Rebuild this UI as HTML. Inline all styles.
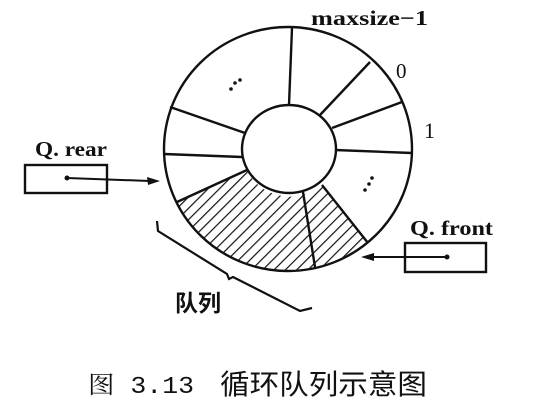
<!DOCTYPE html>
<html><head><meta charset="utf-8"><style>
html,body{margin:0;padding:0;background:#fff;}
svg{display:block}
</style></head><body>
<svg width="559" height="415" viewBox="0 0 559 415" xmlns="http://www.w3.org/2000/svg">
<defs>
<pattern id="h" patternUnits="userSpaceOnUse" width="8" height="8" patternTransform="rotate(45)">
<line x1="0" y1="0" x2="0" y2="8" stroke="#111" stroke-width="2.4"/>
</pattern>
</defs>
<rect width="559" height="415" fill="#fff"/>
<path d="M177,202 L247,170 A47,44 0 0 0 322,185 L368,243 A124,122 0 0 1 177,202 Z" fill="url(#h)" stroke="none"/>
<g stroke="#111" stroke-width="2.4" fill="none">
<ellipse cx="288" cy="149" rx="124" ry="122"/>
<ellipse cx="289" cy="149" rx="47" ry="44" fill="#fff"/>
<line x1="292" y1="28" x2="289" y2="105"/>
<line x1="370" y1="62" x2="320" y2="115"/>
<line x1="402" y1="102" x2="332" y2="128"/>
<line x1="412" y1="153" x2="335" y2="150"/>
<line x1="368" y1="243" x2="322" y2="185"/>
<line x1="315" y1="267" x2="303" y2="192"/>
<line x1="177" y1="202" x2="247" y2="170"/>
<line x1="164" y1="154" x2="242" y2="157"/>
<line x1="170" y1="107" x2="245" y2="133"/>
<rect x="25" y="165" width="82" height="28" stroke-width="2.4"/>
<line x1="67" y1="178" x2="150" y2="181" stroke-width="2"/>
<rect x="405" y="243" width="81" height="29" stroke-width="2.4"/>
<line x1="447" y1="257" x2="370" y2="257" stroke-width="2"/>
<path d="M157,221 L158,231 L227,274 L229,279 L233,277 L300,311 L312,308" stroke-width="2.2"/>
</g>
<circle cx="67" cy="178" r="2.5" fill="#111"/>
<circle cx="447" cy="257" r="2.5" fill="#111"/>
<polygon points="160,181 147,177 148,185" fill="#111"/>
<polygon points="361,257 374,253 374,261" fill="#111"/>
<g fill="#111">
<circle cx="231" cy="89" r="1.8"/><circle cx="235" cy="83" r="1.8"/><circle cx="240" cy="80" r="1.8"/>
<circle cx="365" cy="190" r="1.8"/><circle cx="369" cy="184" r="1.8"/><circle cx="372" cy="178" r="1.8"/>
</g>
<g font-family="Liberation Serif, serif" font-weight="bold" fill="#111">
<text x="311" y="25" font-size="21" textLength="117" lengthAdjust="spacingAndGlyphs">maxsize−1</text>
<text x="396" y="78" font-size="21" font-weight="normal">0</text>
<text x="424" y="138" font-size="22" font-weight="normal">1</text>
<text x="35" y="156" font-size="21" textLength="72" lengthAdjust="spacingAndGlyphs">Q. rear</text>
<text x="410" y="235" font-size="21" textLength="83" lengthAdjust="spacingAndGlyphs">Q. front</text>
</g>
<text x="175" y="311" font-family="Liberation Sans, 'Noto Sans CJK SC', sans-serif" font-size="23" font-weight="bold" fill="#111">队列</text>
<text x="88" y="393" font-family="Liberation Mono, 'Noto Serif CJK SC', monospace" font-size="24" fill="#111" textLength="106" lengthAdjust="spacingAndGlyphs">图 3.13</text>
<text x="220" y="394" font-family="'Noto Sans CJK SC', sans-serif" font-size="28" fill="#111" textLength="207" lengthAdjust="spacingAndGlyphs">循环队列示意图</text>
</svg>
</body></html>
